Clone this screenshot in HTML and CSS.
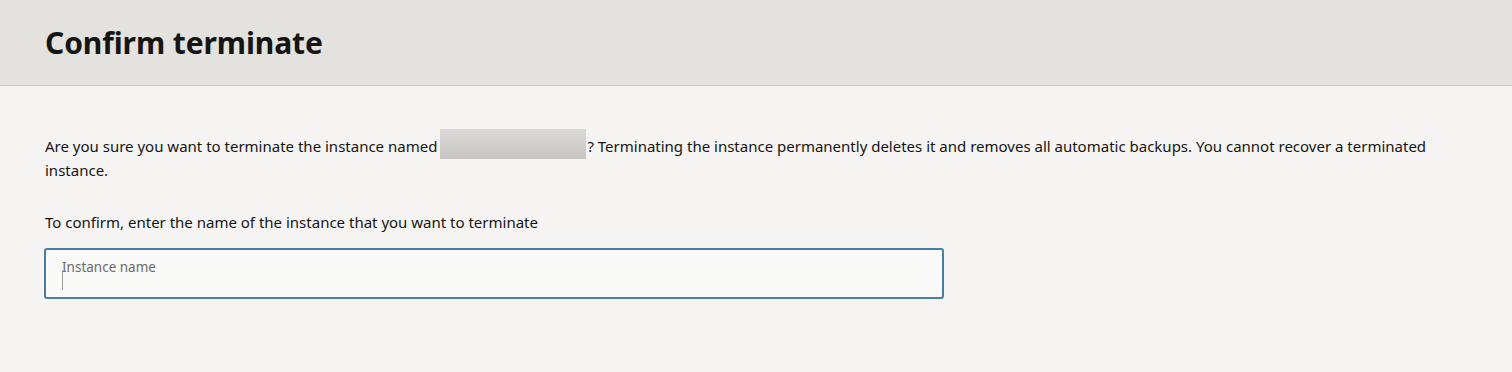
FILE: index.html
```html
<!DOCTYPE html>
<html lang="en">
<head>
<meta charset="utf-8">
<title>Confirm terminate</title>
<link rel="stylesheet" href="styles.css">
</head>
<body>
<div class="dialog">
  <header class="dialog-header">
    <h1 class="dialog-title">Confirm terminate</h1>
  </header>
  <main class="dialog-body">
    <p class="message">Are you sure you want to terminate the instance named<span class="redacted"></span>? Terminating the instance permanently deletes it and removes all automatic backups. You cannot recover a terminated instance.</p>
    <p class="prompt">To confirm, enter the name of the instance that you want to terminate</p>
    <div class="field">
      <label class="field-label" for="iname">Instance name</label>
      <div class="field-input-row">
        <span class="caret"></span>
        <input id="iname" class="field-input" type="text">
      </div>
    </div>
  </main>
</div>
</body>
</html>
```
FILE: styles.css
```css
* { box-sizing: border-box; }
html, body { margin: 0; padding: 0; }
body {
  background: #f5f4f2;
  font-family: "Noto Sans", "Open Sans", sans-serif;
  color: #161513;
  width: 1512px;
  height: 372px;
  overflow: hidden;
}
.dialog-header {
  background: #e4e2de;
  height: 86px;
  border-bottom: 1px solid #cbc9c6;
  display: flex;
  align-items: center;
  padding: 0 45px;
}
.dialog-title {
  margin: 0;
  font-size: 30px;
  font-weight: 700;
  letter-spacing: -0.1px;
  color: #161513;
}
.dialog-body {
  padding: 48px 45px 0;
}
.message {
  margin: 0;
  font-size: 15px;
  line-height: 24px;
  max-width: 1395px;
}
.redacted {
  display: inline-block;
  width: 146px;
  height: 24px;
  vertical-align: top;
  margin: 0 1px 0 3px;
  box-shadow: 0 -5px 0 #d9d8d6, 0 1px 0 #c6c5c4;
  background: linear-gradient(180deg, #d8d7d5 0%, #cfcecc 50%, #c6c5c4 100%);
}
.prompt {
  margin: 28px 0 0;
  font-size: 15px;
  line-height: 24px;
}
.field {
  margin-top: 14px;
  margin-left: -1px;
  width: 900px;
  height: 51px;
  border: 2px solid #467fa2;
  border-radius: 3px;
  background: #f9f9f7;
  padding: 10px 16px 0;
}
.field-label {
  display: block;
  font-size: 13.5px;
  line-height: 14px;
  color: #6b6967;
}
.field-input-row {
  display: flex;
  align-items: flex-start;
  height: 20px;
}
.caret {
  width: 1px;
  height: 20px;
  margin-top: -4px;
  background: #a09e9c;
}
.field-input {
  border: none;
  background: transparent;
  outline: none;
  flex: 1;
  height: 20px;
  padding: 0;
  font: inherit;
}
```
